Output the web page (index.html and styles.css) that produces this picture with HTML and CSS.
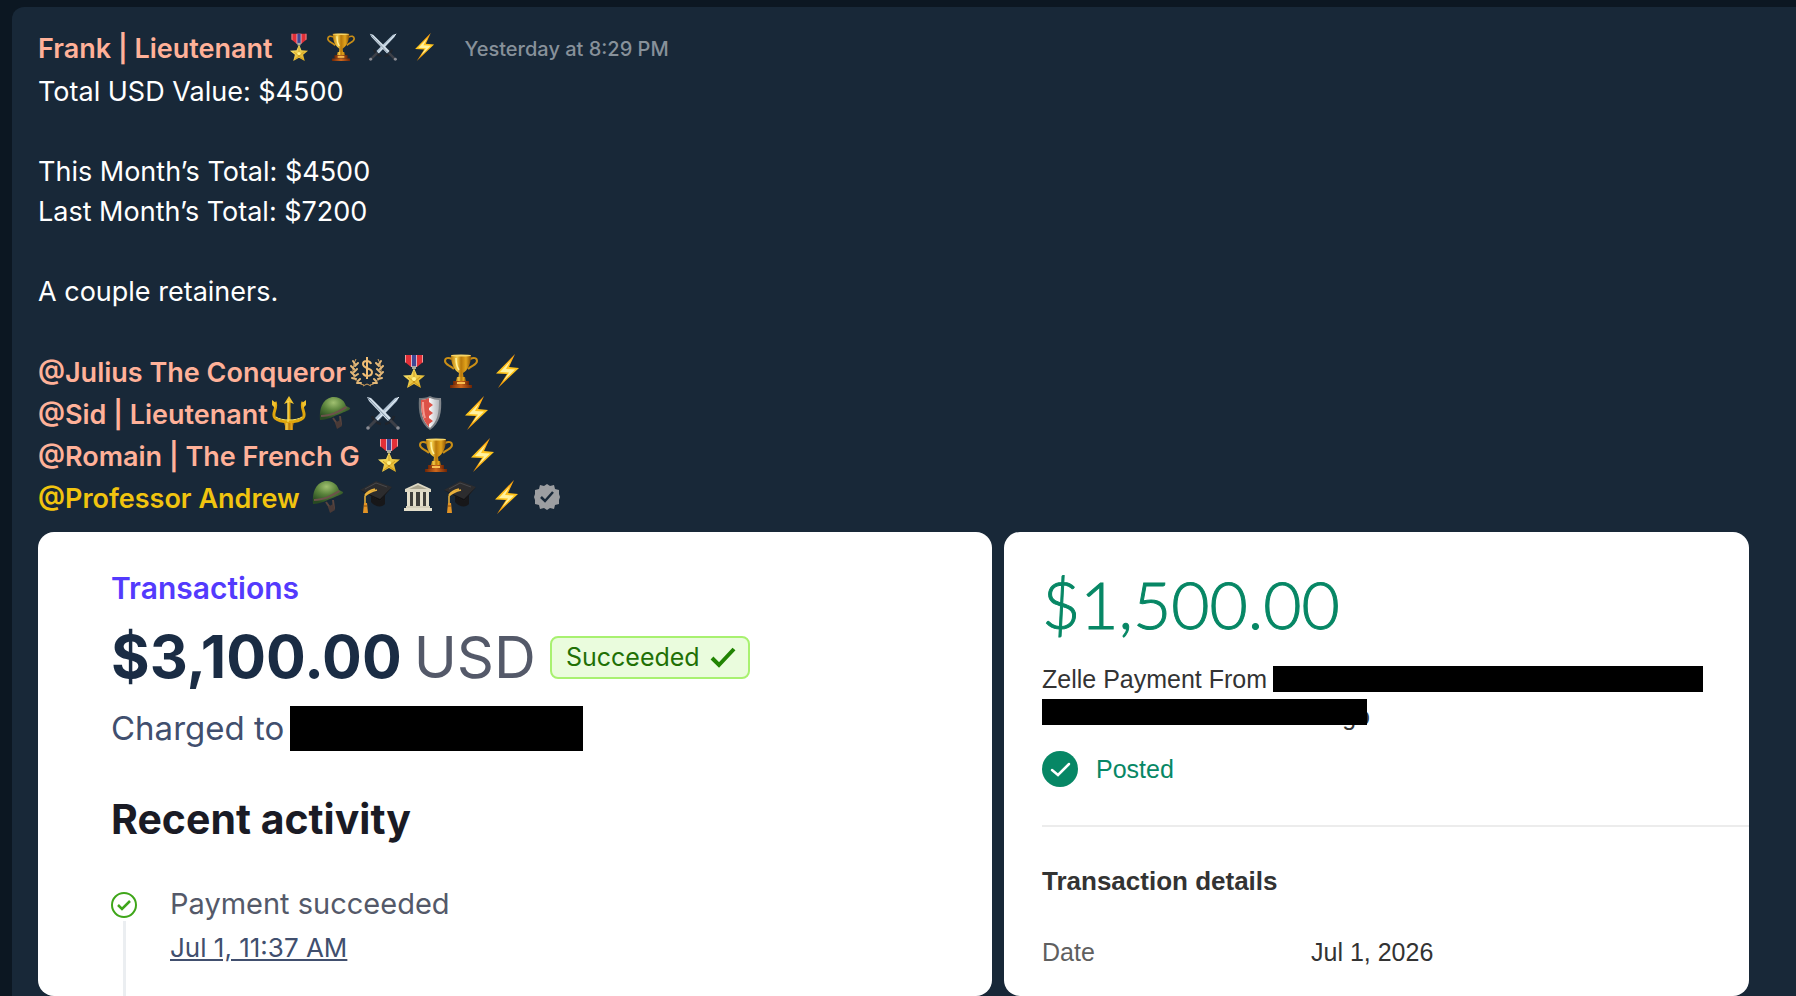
FILE: index.html
```html
<!DOCTYPE html>
<html lang="en">
<head>
    <meta charset="UTF-8">
    <meta name="viewport" content="width=device-width, initial-scale=1.0">
    <title>Frank | Lieutenant</title>
    <link rel="stylesheet" href="styles.css">
</head>
<body>
    <!-- shared icons -->
    <svg class="sprite" aria-hidden="true">
        <defs>
            <linearGradient id="gold" x1="0" x2="1" y1="0" y2="0">
                <stop offset="0" stop-color="#b87a0c"/>
                <stop offset=".3" stop-color="#f6cf4a"/>
                <stop offset=".5" stop-color="#b9780a"/>
                <stop offset=".75" stop-color="#e2a41c"/>
                <stop offset="1" stop-color="#8a5206"/>
            </linearGradient>
            <linearGradient id="star" x1="0" x2="1" y1="0" y2="1">
                <stop offset="0" stop-color="#fff07a"/>
                <stop offset="1" stop-color="#d9a417"/>
            </linearGradient>
            <linearGradient id="flash" x1="0" x2="0" y1="0" y2="1">
                <stop offset="0" stop-color="#ff9d0a"/>
                <stop offset=".5" stop-color="#ffc91f"/>
                <stop offset="1" stop-color="#f59300"/>
            </linearGradient>
            <linearGradient id="wood" x1="0" x2="1" y1="0" y2="0">
                <stop offset="0" stop-color="#6d2405"/>
                <stop offset=".5" stop-color="#d0691c"/>
                <stop offset="1" stop-color="#6d2405"/>
            </linearGradient>
            <linearGradient id="steel" x1="0" x2="1" y1="0" y2="0">
                <stop offset="0" stop-color="#6d7277"/>
                <stop offset="1" stop-color="#85898e"/>
            </linearGradient>
            <linearGradient id="silver" x1="0" x2="1" y1="0" y2="0">
                <stop offset="0" stop-color="#ffffff"/>
                <stop offset=".5" stop-color="#f4f4f6"/>
                <stop offset="1" stop-color="#b4b6bb"/>
            </linearGradient>
            <radialGradient id="olive" cx=".45" cy=".25" r=".7">
                <stop offset="0" stop-color="#a0c070"/>
                <stop offset=".5" stop-color="#58813a"/>
                <stop offset="1" stop-color="#284a22"/>
            </radialGradient>
        </defs>

        <symbol id="medal" viewBox="0 0 34 34">
            <path d="M8 1h18v7l-6 5h-6L8 8z" fill="#e22f37"/>
            <path d="M8 1h1v8L8 8zM25 1h1v7l-1 1z" fill="#f09a9a"/>
            <path d="M14 1h6v12h-6z" fill="#d9b5c8"/>
            <path d="M15 1h4v12h-4z" fill="#404794"/>
            <path d="M15 12h4v3h-4z" fill="#a9a9a0"/>
            <path d="M17 14l3 7 8 .5-6 5 2 7.5-7-4-7 4 2-7.5-6-5 8-.5z" fill="url(#star)"/>
            <path d="M17 17v11M17 28l-5 4M17 28l5 4M17 28l-6-5M17 28l6-5" stroke="#c28a0d" stroke-width=".7" fill="none"/>
            <circle cx="17" cy="25" r="2" fill="#fff38a"/>
        </symbol>

        <symbol id="trophy" viewBox="0 0 34 34">
            <path d="M8 5C4 3 1 4 1 7c0 4 5 4 9 8M26 5c4-2 7-1 7 2 0 4-5 4-9 8" fill="none" stroke="#c98e16" stroke-width="2"/>
            <path d="M7 1h20c0 9-3 15-8 18l1 8h-6l1-8C10 16 7 10 7 1z" fill="url(#gold)"/>
            <ellipse cx="17" cy="1.5" rx="10" ry="1" fill="#f7d566"/>
            <path d="M12 4c0 6 1 9 3 12" stroke="#fff1a0" stroke-width="1.5" fill="none"/>
            <path d="M13 23h8l1 4H12z" fill="url(#gold)"/>
            <path d="M9 27h16v4H9z" fill="url(#wood)"/>
            <path d="M13 28h8v2h-8z" fill="#f9c052"/>
            <path d="M6 31h22v3H6z" fill="url(#wood)"/>
        </symbol>

        <symbol id="bolt" viewBox="0 0 34 34">
            <path d="M24 0L5 19.500l11 .5-9 14 21-20-10-1z" fill="url(#flash)"/>
            <path d="M20 6L9 18l9 .5-6 9 12-12-9-.5z" fill="#fff2a0"/>
        </symbol>

        <symbol id="swords" viewBox="0 0 34 34">
            <path d="M33 1l-4 1L9 22l3 3L31 5z" fill="#b2c4d4"/>
            <path d="M33 1L11 24" stroke="#eef6fb" stroke-width="1"/>
            <path d="M1 1l4 1 20 20-3 3L3 5z" fill="#d3e0ea"/>
            <path d="M2 2l21 22" stroke="#7b8ea0" stroke-width="1"/>
            <path d="M6 20c1 4 4 7 9 8M28 20c-1 4-4 7-9 8" stroke="#20242b" stroke-width="2.500" fill="none"/>
            <path d="M10 24l-8 8M24 24l8 8" stroke="#3d4048" stroke-width="3"/>
            <circle cx="2" cy="32" r="1.800" fill="#8a8c94"/>
            <circle cx="32" cy="32" r="1.800" fill="#8a8c94"/>
        </symbol>

        <symbol id="shield" viewBox="0 0 34 34">
            <path d="M17 0c4 2 7 2 11 2 1 14-1 25-11 32C7 27 5 16 6 2c4 0 7 0 11-2z" fill="url(#steel)"/>
            <path d="M17 2c3 1 6 2 9 2 0 12-1 21-9 28C9 25 8 16 8 4c3 0 6-1 9-2z" fill="url(#silver)"/>
            <path d="M16 2c-3 1-5 2-8 2 0 11 1 20 8 27v-3l4-3-4-3v-2l4-3-4-3v-2l4-3-4-3z" fill="#dd5248"/>
            <path d="M10 6c0 7 0 11 2 16" stroke="#f4988e" stroke-width="2" fill="none"/>
        </symbol>

        <symbol id="helmet" viewBox="0 0 34 34">
            <path d="M14 22l5 7 3-1-1-8" fill="none" stroke="#59453f" stroke-width="2"/>
            <path d="M16 27l5-3 2 6-5 3z" fill="#4a3a37"/>
            <path d="M1 24C0 14 3 3 13 1c9-1 13 5 14 9l4 2c1 2-4 3-8 5-8 3-14 7-22 7z" fill="url(#olive)"/>
            <path d="M2 19c9 0 17-4 25-9l1 2C20 17 11 21 2 21z" fill="#6d524b"/>
        </symbol>

        <symbol id="trident" viewBox="0 0 34 34">
            <g fill="none" stroke="#e0a60c" stroke-width="3">
                <path d="M17 5v26"/>
                <path d="M3 6c3 6-4 12 0 16 5 5 23 5 28 0 4-4-3-10 0-16"/>
            </g>
            <path d="M17 0l5 8-5-2-5 2zM0 4l4 3-1 5-3-3zM34 4l-4 3 1 5 3-3z" fill="#f0c22e"/>
            <path d="M16 5v21" stroke="#ffea78" stroke-width="1"/>
            <path d="M4 21c5 4 21 4 26 0" stroke="#ffe45c" stroke-width="1" fill="none"/>
            <path d="M12 27h10l-1 3v4h-8v-4z" fill="url(#gold)"/>
        </symbol>

        <symbol id="laurel" viewBox="0 0 34 34">
            <path d="M14 31C3 29 0 17 6 5M20 31c11-2 14-14 8-26" fill="none" stroke="#d7a25a" stroke-width="1"/>
            <path d="M3 7l2 3M1 12l3 3M1 18l3 3M2 24l4 1M7 29l4 0M8 9l-3 3M7 15l-3 3M8 20l-3 2M10 25l-2 2M31 7l-2 3M33 12l-3 3M33 18l-3 3M32 24l-4 1M27 29l-4 0M26 9l3 3M27 15l3 3M26 20l3 2M24 25l2 2" stroke="#e3b878" stroke-width="2" stroke-linecap="round"/>
            <path d="M21 10c-1-4-8-4-8 0 0 5 9 4 9 8 0 5-8 5-9 1M17 3v22" fill="none" stroke="#f0bd74" stroke-width="2"/>
            <path d="M13 32l4-2 4 2" fill="none" stroke="#d7a25a" stroke-width="1"/>
        </symbol>

        <symbol id="cap" viewBox="0 0 34 34">
            <path d="M12 12v10c4 5 11 6 14 2V12z" fill="#171719"/>
            <path d="M1 10L17 1l16 6-12 14z" fill="#2c2c2e"/>
            <path d="M1 10l20 11 12-14-12 12z" fill="#131315"/>
            <path d="M6 9l11-6 11 4" stroke="#48484b" stroke-width="1" fill="none"/>
            <path d="M18 10c-4 1-9 3-12 6v9M16 9c-4 1-8 3-10 6" fill="none" stroke="#eab23c" stroke-width="1.500"/>
            <path d="M5 23h3l1 10H4z" fill="#e39425"/>
            <path d="M5 26h3" stroke="#8f4d0c" stroke-width="1"/>
        </symbol>

        <symbol id="museum" viewBox="0 0 28 28">
            <path d="M14 0l13 6v3H1V6z" fill="#ddd8c4"/>
            <path d="M14 2l9 4H5z" fill="#aaa48e"/>
            <path d="M3 9h22v15H3z" fill="#3f3f3b"/>
            <path d="M3 9h3v15H3zM9 9h3v15H9zM16 9h3v15h-3zM22 9h3v15h-3z" fill="#e4dfcb"/>
            <path d="M2 23h24v2H2z" fill="#d5d0bc"/>
            <path d="M0 25h28v3H0z" fill="#e4dfcb"/>
        </symbol>

        <symbol id="verified" viewBox="0 0 26 26">
            <path d="M13 0l3 2 4-1 1 4 4 1v4l1 3-1 3v4l-4 1-1 4-4-1-3 2-3-2-4 1-1-4-4-1v-4l-1-3 1-3V6l4-1 1-4 4 1z" fill="#9c9ea1"/>
            <path d="M7 13l4 4 8-9" fill="none" stroke="#182838" stroke-width="2.500"/>
        </symbol>
    </svg>

    <main class="message">
        <header class="message-header">
            <h1 class="author">Frank | Lieutenant</h1>
            <div class="header-icons">
                <svg><use href="#medal"/></svg>
                <svg><use href="#trophy"/></svg>
                <svg><use href="#swords"/></svg>
                <svg><use href="#bolt"/></svg>
            </div>
            <time class="time">Yesterday at 8:29 PM</time>
        </header>

        <div class="message-text">
            <p>Total USD Value: $4500</p>
            <p>This Month’s Total: $4500<br>Last Month’s Total: $7200</p>
            <p>A couple retainers.</p>
        </div>

        <ul class="mentions">
            <li>
                <a href="#">@Julius The Conqueror</a>
                <div class="icons icons-tight">
                    <svg><use href="#laurel"/></svg>
                    <svg><use href="#medal"/></svg>
                    <svg><use href="#trophy"/></svg>
                    <svg><use href="#bolt"/></svg>
                </div>
            </li>
            <li>
                <a href="#">@Sid | Lieutenant</a>
                <div class="icons icons-tight">
                    <svg><use href="#trident"/></svg>
                    <svg><use href="#helmet"/></svg>
                    <svg><use href="#swords"/></svg>
                    <svg><use href="#shield"/></svg>
                    <svg><use href="#bolt"/></svg>
                </div>
            </li>
            <li>
                <a href="#">@Romain | The French G</a>
                <div class="icons">
                    <svg><use href="#medal"/></svg>
                    <svg><use href="#trophy"/></svg>
                    <svg><use href="#bolt"/></svg>
                </div>
            </li>
            <li>
                <a href="#" class="professor">@Professor Andrew</a>
                <div class="icons">
                    <svg><use href="#helmet"/></svg>
                    <svg><use href="#cap"/></svg>
                    <svg class="icon-museum"><use href="#museum"/></svg>
                    <svg><use href="#cap"/></svg>
                    <svg><use href="#bolt"/></svg>
                    <svg class="icon-verified"><use href="#verified"/></svg>
                </div>
            </li>
        </ul>

        <div class="attachments">
            <section class="card stripe">
                <a href="#" class="stripe-link">Transactions</a>
                <div class="stripe-amount">
                    <strong>$3,100.00</strong>
                    <span class="currency">USD</span>
                    <span class="badge">
                        Succeeded
                        <svg viewBox="0 0 26 22"><path d="M2 12l7 7L24 3" fill="none" stroke="#228403" stroke-width="4"/></svg>
                    </span>
                </div>
                <p class="charged">Charged to <span class="redacted"></span></p>
                <h2>Recent activity</h2>
                <div class="activity">
                    <div class="timeline">
                        <svg viewBox="0 0 26 26"><circle cx="13" cy="13" r="12" fill="none" stroke="#3fa61a" stroke-width="2"/><path d="M7 13l4 4 8-8" fill="none" stroke="#3fa61a" stroke-width="2.500"/></svg>
                    </div>
                    <div>
                        <p class="activity-title">Payment succeeded</p>
                        <a href="#" class="activity-date">Jul 1, 11:37 AM</a>
                    </div>
                </div>
            </section>

            <section class="card bank">
                <p class="bank-amount">$1,500.00</p>
                <div class="payee">
                    <span>Zelle Payment From</span>
                    <span class="redacted"></span>
                </div>
                <div class="redacted-line">go</div>
                <div class="posted">
                    <svg viewBox="0 0 36 36"><circle cx="18" cy="18" r="18" fill="#078765"/><path d="M10 19l6 5 11-11" fill="none" stroke="#fff" stroke-width="2.500" stroke-linecap="round"/></svg>
                    <span>Posted</span>
                </div>
                <div class="details">
                    <h2>Transaction details</h2>
                    <dl>
                        <dt>Date</dt>
                        <dd>Jul 1, 2026</dd>
                    </dl>
                </div>
            </section>
        </div>
    </main>
</body>
</html>
```

FILE: styles.css
```css
* {
    box-sizing: border-box;
}

body {
    margin: 0;
    padding: 7px 0 0 12px;
    background-color: #0c1722;
    color: #fff;
    font-family: Inter, "Liberation Sans", sans-serif;
    font-size: 27px;
    line-height: 40px;
}

h1, h2, p, ul, dl, dd {
    margin: 0;
    padding: 0;
}

.sprite {
    position: absolute;
    width: 0;
    height: 0;
}

.message {
    background-color: #182838;
    border-top-left-radius: 12px;
    padding: 22px 47px 0 26px;
}

.message-header {
    display: flex;
    align-items: center;
    margin-bottom: 3px;
}

.author {
    font-size: 27px;
    font-weight: 600;
    color: #ffb199;
}

.header-icons {
    display: flex;
    gap: 14px;
    margin: 0 26px 4px 12px;
}

.header-icons svg {
    width: 28px;
    height: 28px;
}

.time {
    font-size: 20px;
    font-weight: 500;
    color: #87919a;
}

.message-text p {
    margin-bottom: 40px;
}

.mentions {
    list-style: none;
    margin-bottom: 12px;
}

.mentions li {
    display: flex;
    align-items: center;
    height: 42px;
}

.mentions a {
    color: #ffb199;
    font-weight: 600;
    text-decoration: none;
}

.mentions .professor {
    color: #f1c40f;
}

.icons {
    display: flex;
    align-items: center;
    gap: 13px;
    margin: 0 0 4px 12px;
}

.icons-tight {
    margin-left: 4px;
}

.icons svg {
    width: 34px;
    height: 34px;
}

.icons .icon-museum {
    width: 28px;
    height: 28px;
    margin: 0 -2px;
}

.icons .icon-verified {
    width: 26px;
    height: 26px;
    margin-left: -3px;
}

.attachments {
    display: grid;
    grid-template-columns: 954fr 745fr;
    gap: 12px;
}

.card {
    background-color: #fff;
    border-radius: 16px;
    overflow: hidden;
}

.redacted {
    background-color: #000;
}

/* left card */
.stripe {
    padding: 36px 72px 0 73px;
}

.stripe-link {
    display: block;
    color: #533afd;
    font-size: 30px;
    font-weight: 600;
    text-decoration: none;
}

.stripe-amount {
    display: flex;
    align-items: center;
    margin-top: 17px;
    font-size: 59px;
    line-height: 64px;
    color: #1a2c44;
}

.currency {
    margin-left: 12px;
    font-size: 58px;
    font-weight: 400;
    color: #545969;
}

.badge {
    display: flex;
    align-items: center;
    gap: 10px;
    height: 43px;
    margin-left: 14px;
    padding: 0 12px 0 14px;
    border: 2px solid #a8f170;
    border-radius: 8px;
    background-color: #eafcdd;
    color: #217005;
    font-size: 25px;
    line-height: 40px;
}

.badge svg {
    width: 26px;
    height: 22px;
}

.charged {
    display: flex;
    align-items: center;
    gap: 6px;
    margin-top: 17px;
    color: #414f6e;
    font-size: 33px;
    line-height: 45px;
}

.charged .redacted {
    width: 293px;
    height: 45px;
}

.stripe h2 {
    margin-top: 42px;
    color: #1a1b25;
    font-size: 41px;
    font-weight: 700;
    line-height: 52px;
}

.activity {
    display: flex;
    gap: 33px;
    margin-top: 39px;
}

.timeline {
    display: flex;
    flex-direction: column;
    align-items: center;
    padding-top: 8px;
}

.timeline svg {
    width: 26px;
    height: 26px;
}

.timeline::after {
    content: "";
    flex: 1;
    width: 3px;
    margin-top: 3px;
    background-color: #ebeef1;
}

.activity-title {
    color: #545969;
    font-size: 29px;
    line-height: 40px;
}

.activity-date {
    display: block;
    margin: 4px 0 28px;
    color: #414f6e;
    font-size: 26px;
}

/* right card */
.bank {
    padding: 36px 0 0 38px;
    color: #333;
    font-family: "Liberation Sans", Arial, sans-serif;
    font-size: 25px;
}

.bank-amount {
    color: #078765;
    font-family: Lato, sans-serif;
    font-size: 66px;
    font-weight: 300;
    line-height: 72px;
    -webkit-text-stroke: 1px #078765;
}

.payee {
    display: flex;
    align-items: center;
    gap: 6px;
    margin: 19px 46px 0 0;
}

.payee .redacted {
    flex: 1;
    height: 26px;
}

/* the end of the name shows from behind the bar */
.redacted-line {
    position: relative;
    width: 328px;
    height: 26px;
    line-height: 34px;
    text-align: right;
}

.redacted-line::after {
    content: "";
    position: absolute;
    inset: 0 3px 0 0;
    background-color: #000;
}

.posted {
    display: flex;
    align-items: center;
    gap: 18px;
    margin-top: 24px;
    color: #078765;
}

.posted svg {
    width: 36px;
    height: 36px;
}

.details {
    margin-top: 36px;
    padding-top: 34px;
    border-top: 2px solid #ececec;
}

.details h2 {
    font-size: 26px;
}

.details dl {
    display: grid;
    grid-template-columns: 269px 1fr;
    margin-top: 31px;
}

.details dt {
    color: #5f5f5f;
}
```
